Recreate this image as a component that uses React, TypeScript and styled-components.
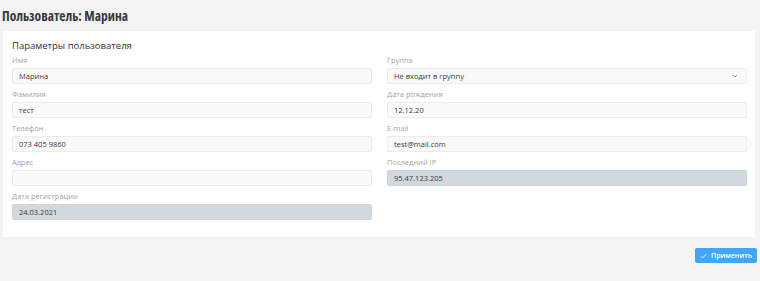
import React from 'react'
import styled, { createGlobalStyle } from 'styled-components'

const GlobalStyle = createGlobalStyle`
  html, body {
    margin: 0;
    padding: 0;
    background: #f4f4f4;
    font-family: 'Open Sans', 'Noto Sans', sans-serif;
  }
`

const Page = styled.div`
  width: 760px;
  height: 281px;
  box-sizing: border-box;
  padding: 0 3px;
  display: flex;
  flex-direction: column;
`

const Title = styled.h1`
  margin: 0 0 0 -1px;
  padding-top: 7px;
  height: 31px;
  box-sizing: border-box;
  font-size: 13.5px;
  line-height: 18px;
  font-weight: 700;
  font-stretch: 75%;
  color: #343a40;
`

const Card = styled.div`
  background: #fff;
  width: 752px;
  box-sizing: border-box;
  padding: 8px 8px 17px 9px;
`

const CardTitle = styled.div`
  font-size: 9.5px;
  line-height: 13px;
  color: #333;
  margin-bottom: 3px;
`

const Columns = styled.div`
  display: grid;
  grid-template-columns: 360px 360px;
  column-gap: 15px;
  align-items: start;
`

const Column = styled.div`
  display: flex;
  flex-direction: column;
  gap: 5px;
`

const Field = styled.div`
  display: flex;
  flex-direction: column;
`

const Label = styled.div`
  font-size: 7.5px;
  line-height: 11px;
  color: #a3a3a3;
  margin-bottom: 2px;
`

const Input = styled.div<{ $disabled?: boolean }>`
  height: 16px;
  box-sizing: border-box;
  border: 1px solid ${(p) => (p.$disabled ? '#cdd4d9' : '#ececec')};
  border-radius: 2px;
  background: ${(p) => (p.$disabled ? '#d2d9de' : '#fafafa')};
  padding: 0 6px;
  font-size: 7.5px;
  line-height: 14px;
  color: #3a3a3a;
  display: flex;
  align-items: center;
  justify-content: space-between;
`

const Chevron = styled.svg`
  width: 6px;
  height: 6px;
  margin-right: 2px;
`

const Footer = styled.div`
  display: flex;
  justify-content: flex-end;
  padding-top: 11px;
`

const Button = styled.button`
  width: 62px;
  height: 15px;
  border: none;
  border-radius: 2px;
  background: #42a5f5;
  color: #fff;
  font-family: 'Open Sans', sans-serif;
  font-size: 7px;
  font-weight: 600;
  display: flex;
  align-items: center;
  justify-content: center;
  gap: 4px;
  padding: 0;
`

type FieldProps = {
  label: string
  value?: string
  disabled?: boolean
  select?: boolean
}

const FormField = ({ label, value, disabled, select }: FieldProps) => (
  <Field>
    <Label>{label}</Label>
    <Input $disabled={disabled}>
      <span>{value}</span>
      {select && (
        <Chevron viewBox="0 0 6 6">
          <path d="M1 2l2 2 2-2" fill="none" stroke="#888" strokeWidth="0.8" />
        </Chevron>
      )}
    </Input>
  </Field>
)

export default function App() {
  return (
    <>
      <GlobalStyle />
      <Page>
        <Title>Пользователь: Марина</Title>
        <Card>
          <CardTitle>Параметры пользователя</CardTitle>
          <Columns>
            <Column>
              <FormField label="Имя" value="Марина" />
              <FormField label="Фамилия" value="тест" />
              <FormField label="Телефон" value="073 405 9860" />
              <FormField label="Адрес" />
              <FormField label="Дата регистрации" value="24.03.2021" disabled />
            </Column>
            <Column>
              <FormField label="Группа" value="Не входит в группу" select />
              <FormField label="Дата рождения" value="12.12.20" />
              <FormField label="E-mail" value="test@mail.com" />
              <FormField label="Последний IP" value="95.47.123.205" disabled />
            </Column>
          </Columns>
        </Card>
        <Footer>
          <Button>
            <svg width="7" height="6" viewBox="0 0 7 6">
              <path d="M0.8 3.2l1.8 1.8 3.8-4" fill="none" stroke="#fff" strokeWidth="0.9" />
            </svg>
            Применить
          </Button>
        </Footer>
      </Page>
    </>
  )
}
